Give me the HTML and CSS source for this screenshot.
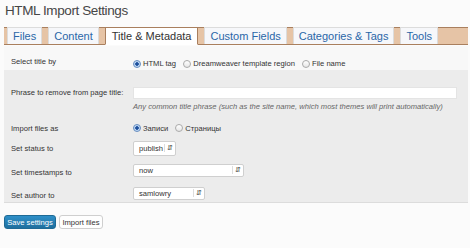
FILE: index.html
```html
<!DOCTYPE html>
<html lang="en">
<head>
    <meta charset="UTF-8">
    <title>HTML Import Settings</title>
    <link rel="stylesheet" href="styles.css">
</head>
<body>
    <div class="wrap">
        <h2>HTML Import Settings</h2>

        <div class="tabs">
            <span class="tab">Files</span>
            <span class="tab">Content</span>
            <span class="tab active">Title &amp; Metadata</span>
            <span class="tab">Custom Fields</span>
            <span class="tab">Categories &amp; Tags</span>
            <span class="tab">Tools</span>
        </div>

        <table class="form-table">
            <tr class="first">
                <th>Select title by</th>
                <td class="radios">
                    <label><span class="radio checked"></span>HTML tag</label>
                    <label><span class="radio"></span>Dreamweaver template region</label>
                    <label><span class="radio"></span>File name</label>
                </td>
            </tr>
            <tr class="phrase">
                <th>Phrase to remove from page title:</th>
                <td>
                    <div class="text-input"></div>
                    <div class="hint">Any common title phrase (such as the site name, which most themes will print automatically)</div>
                </td>
            </tr>
            <tr class="import">
                <th>Import files as</th>
                <td class="radios">
                    <label><span class="radio checked"></span>Записи</label>
                    <label><span class="radio"></span>Страницы</label>
                </td>
            </tr>
            <tr class="status">
                <th>Set status to</th>
                <td><div class="select small">publish<span class="arrows">&#8693;</span></div></td>
            </tr>
            <tr class="stamps">
                <th>Set timestamps to</th>
                <td><div class="select wide">now<span class="arrows">&#8693;</span></div></td>
            </tr>
            <tr class="author">
                <th>Set author to</th>
                <td><div class="select mid">samlowry<span class="arrows">&#8693;</span></div></td>
            </tr>
        </table>

        <div class="buttons">
            <button class="primary">Save settings</button>
            <button class="secondary">Import files</button>
        </div>
    </div>
</body>
</html>
```

FILE: styles.css
```css
* {
    margin: 0;
    padding: 0;
    box-sizing: border-box;
}

body {
    font-family: "Liberation Sans", Arial, sans-serif;
    background: #fbfbfb;
    color: #333;
    width: 470px;
    height: 248px;
    overflow: hidden;
}

.wrap {
    padding: 0 2px 0 4px;
}

h2 {
    font-weight: normal;
    font-size: 13.5px;
    letter-spacing: -0.4px;
    color: #464646;
    padding: 3px 0 0 1px;
    height: 27px;
}

.tabs {
    display: flex;
    gap: 6px;
    height: 18px;
    padding: 0 0 0 3px;
    background: #e6c4a6;
    border-top: 1px solid #a97f5e;
    border-bottom: 1px solid #a97f5e;
    align-items: flex-end;
}

.tab {
    display: block;
    height: 17px;
    padding: 2px 5px 0;
    font-size: 11px;
    color: #2a66a8;
    background: #f6f7fa;
    border: 1px solid #dcdcdc;
    border-bottom: none;
}

.tab.active {
    color: #333;
    background: #fff;
    border: 1px solid #a97f5e;
    border-bottom: 1px solid #fff;
    height: 18px;
    margin-bottom: -1px;
    padding: 2px 6px 0;
}

.form-table {
    width: 100%;
    border-collapse: collapse;
    background: #ececec;
    border-bottom: 1px solid #dcdcdc;
    font-size: 7.6px;
    margin-top: 1px;
}

.form-table th {
    text-align: left;
    font-weight: normal;
    width: 128px;
    padding: 0 0 0 7px;
    vertical-align: top;
    color: #333;
}

.form-table td {
    vertical-align: top;
    padding: 0 0 0 1px;
}

.first {
    background: #f8f8f8;
}

.first th { padding-top: 11px; height: 23px; }
.first td { padding-top: 13px; }

.phrase th { padding-top: 18px; height: 47px; }
.phrase td { padding-top: 17px; }

.import th { padding-top: 7px; height: 20px; }
.import td { padding-top: 7px; }

.status th { padding-top: 7px; height: 23px; }
.status td { padding-top: 4px; }

.stamps th { padding-top: 8px; height: 22px; }
.stamps td { padding-top: 4px; }

.author th { padding-top: 9px; height: 21px; }
.author td { padding-top: 5px; }

.radios label {
    display: inline-flex;
    align-items: center;
    margin-right: 5px;
}

.radio {
    display: inline-block;
    width: 8px;
    height: 8px;
    border-radius: 50%;
    border: 1px solid #aaa;
    background: linear-gradient(#fff, #e6e6e6);
    margin-right: 2px;
}

.radio.checked {
    border-color: #6a8fbf;
    background: radial-gradient(circle, #1d4f9c 0 1.5px, #bcd6f4 2px);
}

.text-input {
    width: 324px;
    height: 12px;
    background: #fff;
    border: 1px solid #e4e4e4;
}

.hint {
    margin-top: 3px;
    font-style: italic;
    color: #666;
}

.select {
    display: flex;
    justify-content: space-between;
    align-items: center;
    height: 15px;
    padding: 0 2px 0 5px;
    background: #fff;
    border: 1px solid #cfcfcf;
    border-radius: 2px;
    color: #333;
}

.select.small { width: 43px; }
.select.wide { width: 111px; height: 13px; }
.select.mid { width: 72px; height: 13px; }

.arrows {
    font-size: 7px;
    color: #333;
    border-left: 1px solid #ddd;
    padding-left: 2px;
}

.buttons {
    display: flex;
    gap: 3px;
    padding-top: 12px;
}

button {
    font-family: "Liberation Sans", Arial, sans-serif;
    font-size: 7.6px;
    height: 14px;
    border-radius: 3px;
    cursor: pointer;
}

.primary {
    width: 52px;
    color: #fff;
    background: linear-gradient(#2e8fc8, #1f6f9e);
    border: 1px solid #1e6a95;
}

.secondary {
    width: 44px;
    color: #333;
    background: #fefefe;
    border: 1px solid #cfcfcf;
}
```
